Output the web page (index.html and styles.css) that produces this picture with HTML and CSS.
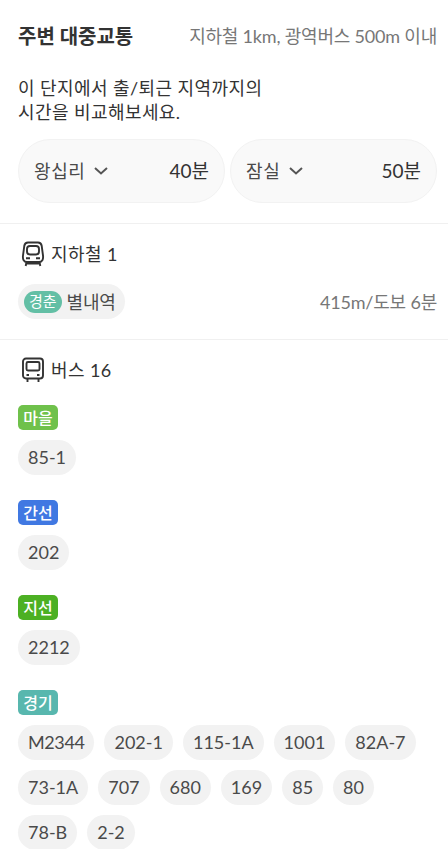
FILE: index.html
```html
<!DOCTYPE html>
<html lang="ko">
<head>
<meta charset="utf-8">
<title>주변 대중교통</title>
<link rel="stylesheet" href="styles.css">
</head>
<body>
	<div class="wrap">
		<div class="head">
			<h2>주변 대중교통</h2>
			<span>지하철 1km, 광역버스 500m 이내</span>
		</div>
		<p class="desc">이 단지에서 출/퇴근 지역까지의<br>시간을 비교해보세요.</p>
		<div class="times">
			<div class="time">
				<span class="place">왕십리</span>
				<svg class="arrow" width="14" height="8" viewBox="0 0 14 8"><path d="M1 1l6 5.4L13 1"/></svg>
				<span class="min">40분</span>
			</div>
			<div class="time">
				<span class="place">잠실</span>
				<svg class="arrow" width="14" height="8" viewBox="0 0 14 8"><path d="M1 1l6 5.4L13 1"/></svg>
				<span class="min">50분</span>
			</div>
		</div>
		<div class="subway">
			<h3>
				<svg class="icon" width="24" height="26" viewBox="0 0 24 26">
					<path d="M7 1.500h10c2.200 0 3.300 1.200 3.700 3.300l1.300 9.700c.5 4-.8 6.500-4 6.500H6c-3.200 0-4.500-2.500-4-6.500l1.300-9.700c.4-2.100 1.500-3.300 3.700-3.300z"/>
					<rect x="6" y="5" width="12" height="8.500" rx="3"/>
					<path d="M5 17.200h4M15 17.200h4M5.500 21l-.8 4M18.500 21l.8 4M5 22.500h14"/>
				</svg>
				지하철 1
			</h3>
			<div class="station">
				<p class="chip"><em>경춘</em>별내역</p>
				<span>415m/도보 6분</span>
			</div>
		</div>
		<div class="bus">
			<h3>
				<svg class="icon" width="24" height="26" viewBox="0 0 24 26">
					<rect x="2" y="1.500" width="20" height="20" rx="3"/>
					<rect x="5.500" y="5" width="13" height="8.500" rx="1.500"/>
					<path d="M5.500 18h2.500M16 18h2.500M6.500 22v3M17.500 22v3"/>
				</svg>
				버스 16
			</h3>
			<div class="line">
				<b class="village">마을</b>
				<ul>
					<li>85-1</li>
				</ul>
			</div>
			<div class="line">
				<b class="trunk">간선</b>
				<ul>
					<li>202</li>
				</ul>
			</div>
			<div class="line">
				<b class="branch">지선</b>
				<ul>
					<li>2212</li>
				</ul>
			</div>
			<div class="line">
				<b class="gyeonggi">경기</b>
				<ul>
					<li class="express">M2344</li>
					<li>202-1</li>
					<li>115-1A</li>
					<li>1001</li>
					<li>82A-7</li>
					<li>73-1A</li>
					<li>707</li>
					<li>680</li>
					<li>169</li>
					<li>85</li>
					<li>80</li>
					<li>78-B</li>
					<li>2-2</li>
				</ul>
			</div>
		</div>
	</div>
</body>
</html>
```
FILE: styles.css
```css
body, div, p, h2, h3, ul, li {padding:0; margin:0;}
li {list-style:none;}
* {box-sizing:border-box;}
html {height:100%; overflow:hidden;}
body {height:100%; overflow:hidden; background:#fff; color:#333; font:18px/24px Lato, "Noto Sans CJK KR", sans-serif;}
svg {fill:none; stroke:#333; flex:none;}
em {font-style:normal;}

.head {display:flex; justify-content:space-between; align-items:center; height:72px; padding:0 11px 0 18px;}
.head h2 {font-size:20px; line-height:30px;}
.head span {color:#777; letter-spacing:-.2px;}
.desc {padding:4px 18px 0; letter-spacing:.42px;}
.times {display:flex; gap:5px; padding:15px 11px 20px 18px; border-bottom:1px solid #f0f0f0;}
.time {flex:1; display:flex; align-items:center; height:64px; padding:0 15px; border:1px solid #f2f2f2; border-radius:32px; background:#f9f9f9;}
.place {color:#4a4a4a; letter-spacing:.6px;}
.arrow {margin-left:9px; stroke:#555; stroke-width:2;}
.min {margin-left:auto; font-size:19px; line-height:26px;}

h3 {display:flex; align-items:center; gap:6px; font-size:18px; font-weight:normal; line-height:24px; letter-spacing:.4px;}
.icon {margin-left:3px; stroke-width:1.9;}
.subway {height:116px; padding:17px 11px 0 18px; border-bottom:1px solid #f0f0f0;}
.station {display:flex; justify-content:space-between; align-items:center; margin-top:17px;}
.station span {color:#777; letter-spacing:-.2px;}
.chip {display:flex; align-items:center; height:35px; padding:0 9px 0 6px; border-radius:18px; background:#f2f2f2; color:#4a4a4a; letter-spacing:-.2px;}
.chip em {height:22px; margin-right:5px; padding:0 5px; border-radius:11px; background:#63bfa5; color:#fff; font-size:15px; line-height:20px; letter-spacing:0;}

.bus {padding:17px 18px 0;}
.line {margin-bottom:25px;}
h3 + .line {margin-top:22px;}
.line b {display:block; width:40px; height:25px; border-radius:5px; color:#fff; font-size:16px; font-weight:500; line-height:25px; text-align:center;}
.village {background:#6fc14b;}
.trunk {background:#4078e2;}
.branch {background:#4cb023;}
.gyeonggi {background:#58b7ae;}
.line ul {display:flex; flex-wrap:wrap; gap:10px; margin-top:10px;}
.line li {height:35px; padding:0 10px; border-radius:18px; background:#f2f2f2; color:#4a4a4a; line-height:35px;}
.line .express {letter-spacing:-.4px;}
```
